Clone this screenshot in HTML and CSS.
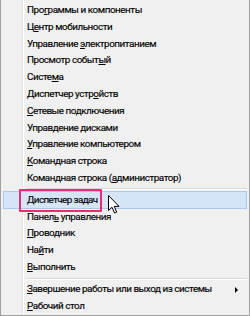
FILE: index.html
```html
<!DOCTYPE html>
<html lang="ru">
<head>
<meta charset="utf-8">
<link rel="stylesheet" href="styles.css">
</head>
<body>
<div class="menu">
  <div class="list">
    <div class="item">Про<u>г</u>раммы и компоненты</div>
    <div class="item">Ц<u>е</u>нтр мобильности</div>
    <div class="item">Управление <u>э</u>лектропитанием</div>
    <div class="item">Просмотр событ<u>ы</u>й</div>
    <div class="item">Систе<u>м</u>а</div>
    <div class="item">Диспетчер устр<u>о</u>йств</div>
    <div class="item"><u>С</u>етевые подключения</div>
    <div class="item">Управ<u>д</u>ение дисками</div>
    <div class="item"><u>У</u>правление компьютером</div>
    <div class="item"><u>К</u>омандная строка</div>
    <div class="item">Командная строка (<u>а</u>дминистратор)</div>
    <div class="sep"></div>
    <div class="item hot">Диспетчер задач<span class="mark"></span>
      <svg class="cursor" width="12" height="19" viewBox="0 0 12 19"><path d="M0.5 0.5 L0.5 15.5 L4 12.2 L6.6 18 L8.7 17.1 L6.2 11.4 L11 11.4 Z" fill="#fff" stroke="#000" stroke-width="1" stroke-linejoin="round"/></svg>
    </div>
    <div class="item">Панел<u>ь</u> управления</div>
    <div class="item"><u>П</u>роводник</div>
    <div class="item">На<u>й</u>ти</div>
    <div class="item"><u>В</u>ыполнить</div>
    <div class="sep sep2"></div>
    <div class="item sub"><span><u>З</u>авершение работы или выход из системы</span><span class="arrow"></span></div>
    <div class="item"><u>Р</u>абочий стол</div>
  </div>
</div>
</body>
</html>
```

FILE: styles.css
```css
html, body {
  margin: 0;
  padding: 0;
  background: #f0f0f0;
}
.menu {
  width: 250px;
  height: 316px;
  box-sizing: border-box;
  border: 1px solid #a0a0a0;
  border-top: none;
  background: #f0f0f0;
  font-family: Roboto, "Noto Sans", sans-serif;
  font-size: 9.9px;
  letter-spacing: -0.45px;
  color: #000;
  -webkit-text-stroke: 0.15px #000;
  overflow: hidden;
}
.list {
  display: flex;
  flex-direction: column;
  padding: 2px 2px 0 2px;
  background: linear-gradient(to right, transparent 21px, #e2e3e3 21px, #e2e3e3 22px, #ffffff 22px, #ffffff 23px, transparent 23px);
  height: 100%;
  box-sizing: border-box;
}
.item {
  height: 16.8px;
  line-height: 16.8px;
  padding-left: 24px;
  white-space: nowrap;
  position: relative;
  box-sizing: border-box;
}
.item u {
  text-decoration: underline;
  text-underline-offset: 1px;
}
.sep {
  height: 4px;
  margin-left: 24px;
  position: relative;
}
.sep::before {
  content: "";
  position: absolute;
  left: 0;
  right: 0;
  top: 1px;
  height: 1px;
  background: #d7d7d7;
  box-shadow: 0 1px 0 #fff;
}
.sep2 {
  height: 6px;
}
.sep2::before {
  top: 2px;
}
.hot {
  height: 18px;
  line-height: 16px;
  background: #d5e4f6;
  border: 1px solid #a9c7ef;
  padding-left: 23px;
  letter-spacing: -0.6px;
}
.mark {
  position: absolute;
  left: 15px;
  width: 83px;
  top: -3px;
  bottom: -4px;
  box-sizing: border-box;
  border: 2px solid #e5306e;
  border-radius: 1px;
}
.cursor {
  position: absolute;
  left: 104px;
  top: 3px;
}
.sub {
  display: flex;
  justify-content: space-between;
  align-items: center;
  padding-right: 9px;
}
.arrow {
  width: 0;
  height: 0;
  border-top: 3px solid transparent;
  border-bottom: 3px solid transparent;
  border-left: 3px solid #000;
}
```
